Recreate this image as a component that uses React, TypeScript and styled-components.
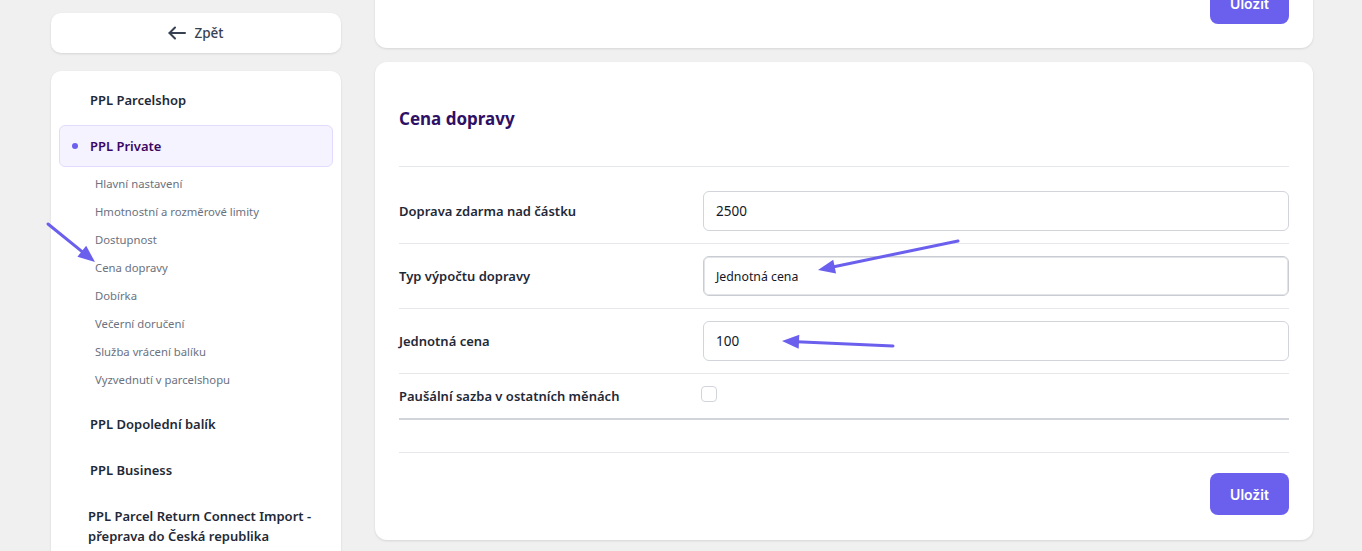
import React from "react";
import styled, { createGlobalStyle } from "styled-components";

const Global = createGlobalStyle`
  html, body { margin: 0; padding: 0; }
  body {
    background: #f0f0f1;
    font-family: "Noto Sans", "Segoe UI", sans-serif;
    color: #1f2937;
    overflow: hidden;
  }
  * { box-sizing: border-box; }
`;

const PURPLE = "#6b5fee";

const Page = styled.div`
  position: relative;
  display: flex;
  align-items: flex-start;
  gap: 34px;
  padding: 13px 0 0 51px;
  height: 551px;
  overflow: hidden;
`;

const Side = styled.aside`
  width: 290px;
  display: flex;
  flex-direction: column;
  gap: 18px;
  flex-shrink: 0;
`;

const Card = styled.div`
  background: #fff;
  border-radius: 10px;
  box-shadow: 0 1px 3px rgba(0, 0, 0, 0.08), 0 1px 2px rgba(0, 0, 0, 0.04);
`;

const BackCard = styled(Card)`
  height: 40px;
  display: flex;
  align-items: center;
  justify-content: center;
  gap: 8px;
  font-size: 13.5px;
  font-weight: 500;
  color: #374151;
`;

const NavCard = styled(Card)`
  padding: 8px 8px 20px;
  display: flex;
  flex-direction: column;
  min-height: 500px;
`;

const NavItem = styled.div<{ $active?: boolean; $shift?: number }>`
  display: flex;
  align-items: flex-start;
  gap: 12px;
  padding: 10px 12px 10px ${(p) => 12 - (p.$shift || 0)}px;
  border-radius: 6px;
  border: 1px solid ${(p) => (p.$active ? "#e3dbfd" : "transparent")};
  background: ${(p) => (p.$active ? "#f5f3ff" : "transparent")};
  color: ${(p) => (p.$active ? "#3b0764" : "#1f2937")};
  font-size: 13px;
  font-weight: 600;
  line-height: 20px;
  margin-top: 4px;
  &:first-child { margin-top: 0; }
`;

const Dot = styled.span<{ $visible?: boolean }>`
  width: 6px;
  height: 6px;
  border-radius: 50%;
  margin-top: 7px;
  flex-shrink: 0;
  background: ${(p) => (p.$visible ? PURPLE : "transparent")};
`;

const SubList = styled.div`
  display: flex;
  flex-direction: column;
  margin: 3px 0 5px;
  padding-left: 36px;
`;

const SubItem = styled.div`
  height: 28px;
  line-height: 28px;
  font-size: 11.3px;
  color: #6b7280;
`;

const Main = styled.main`
  width: 938px;
  display: flex;
  flex-direction: column;
  gap: 14px;
  margin-top: -55px;
  flex-shrink: 0;
`;

const TopCard = styled(Card)`
  padding: 24px;
  display: flex;
  justify-content: flex-end;
  border-radius: 12px;
`;

const PanelCard = styled(Card)`
  padding: 0 24px 25px;
  border-radius: 12px;
`;

const PanelHead = styled.div`
  padding: 45px 0 35px;
  border-bottom: 1px solid #e5e7eb;
`;

const Title = styled.h2`
  margin: 0;
  font-size: 17px;
  line-height: 24px;
  font-weight: 700;
  color: #2e1065;
`;

const Form = styled.div`
  padding-top: 12px;
  border-bottom: 2px solid #d1d5db;
`;

const Row = styled.div<{ $last?: boolean }>`
  display: grid;
  grid-template-columns: 304px 1fr;
  align-items: center;
  padding: 12px 0;
  border-bottom: ${(p) => (p.$last ? "none" : "1px solid #e5e7eb")};
`;

const Label = styled.label`
  font-size: 13px;
  line-height: 20px;
  font-weight: 600;
  color: #1f2937;
`;

const Input = styled.div<{ $select?: boolean }>`
  height: 40px;
  border: 1px solid ${(p) => (p.$select ? "#c9ccd2" : "#d1d5db")};
  box-shadow: ${(p) => (p.$select ? "inset 0 0 0 1px #e2e4e8" : "none")};
  border-radius: 6px;
  display: flex;
  align-items: center;
  padding-left: 12px;
  font-size: ${(p) => (p.$select ? 12.3 : 13.5)}px;
  color: #111827;
  background: #fff;
`;

const Checkbox = styled.span`
  width: 16px;
  height: 16px;
  margin-left: -2px;
  margin-top: -4px;
  border: 1px solid #d1d5db;
  border-radius: 4px;
  display: block;
`;

const Footer = styled.div`
  margin-top: 32px;
  border-top: 1px solid #e5e7eb;
  padding-top: 20px;
  display: flex;
  justify-content: flex-end;
`;

const SaveButton = styled.button`
  width: 79px;
  height: 42px;
  border: none;
  border-radius: 8px;
  background: ${PURPLE};
  color: #fff;
  font-family: Inter, "Noto Sans", sans-serif;
  font-size: 14px;
  font-weight: 600;
`;

const Overlay = styled.svg`
  position: absolute;
  left: 0;
  top: 0;
  width: 1362px;
  height: 551px;
  pointer-events: none;
`;

function Arrow({ x1, y1, x2, y2 }: { x1: number; y1: number; x2: number; y2: number }) {
  const dx = x2 - x1;
  const dy = y2 - y1;
  const len = Math.hypot(dx, dy);
  const ux = dx / len;
  const uy = dy / len;
  const hl = 17;
  const hw = 7;
  const bx = x2 - ux * hl;
  const by = y2 - uy * hl;
  const pts = [
    `${x2},${y2}`,
    `${bx - uy * hw},${by + ux * hw}`,
    `${bx + uy * hw},${by - ux * hw}`,
  ].join(" ");
  return (
    <g>
      <line x1={x1} y1={y1} x2={bx + ux * 2} y2={by + uy * 2} stroke={PURPLE} strokeWidth={3} strokeLinecap="round" />
      <polygon points={pts} fill={PURPLE} />
    </g>
  );
}

const subs = [
  "Hlavní nastavení",
  "Hmotnostní a rozměrové limity",
  "Dostupnost",
  "Cena dopravy",
  "Dobírka",
  "Večerní doručení",
  "Služba vrácení balíku",
  "Vyzvednutí v parcelshopu",
];

export default function App() {
  return (
    <>
      <Global />
      <Page>
        <Side>
          <BackCard>
            <svg width="18" height="14" viewBox="0 0 18 14" fill="none" stroke="#374151" strokeWidth="2" strokeLinecap="round" strokeLinejoin="round">
              <path d="M17 7H1.5" />
              <path d="M7 1.5L1.5 7 7 12.5" />
            </svg>
            Zpět
          </BackCard>
          <NavCard>
            <NavItem>
              <Dot />
              PPL Parcelshop
            </NavItem>
            <NavItem $active>
              <Dot $visible />
              PPL Private
            </NavItem>
            <SubList>
              {subs.map((s) => (
                <SubItem key={s}>{s}</SubItem>
              ))}
            </SubList>
            <NavItem>
              <Dot />
              PPL Dopolední balík
            </NavItem>
            <NavItem>
              <Dot />
              PPL Business
            </NavItem>
            <NavItem $shift={2}>
              <Dot />
              PPL Parcel Return Connect Import - přeprava do Česká republika
            </NavItem>
          </NavCard>
        </Side>
        <Main>
          <TopCard>
            <SaveButton>Uložit</SaveButton>
          </TopCard>
          <PanelCard>
            <PanelHead>
              <Title>Cena dopravy</Title>
            </PanelHead>
            <Form>
              <Row>
                <Label>Doprava zdarma nad částku</Label>
                <Input>2500</Input>
              </Row>
              <Row>
                <Label>Typ výpočtu dopravy</Label>
                <Input $select>Jednotná cena</Input>
              </Row>
              <Row>
                <Label>Jednotná cena</Label>
                <Input>100</Input>
              </Row>
              <Row $last>
                <Label>Paušální sazba v ostatních měnách</Label>
                <Checkbox />
              </Row>
            </Form>
            <Footer>
              <SaveButton>Uložit</SaveButton>
            </Footer>
          </PanelCard>
        </Main>
        <Overlay viewBox="0 0 1362 551">
          <Arrow x1={48} y1={224} x2={95} y2={262} />
          <Arrow x1={958} y1={241} x2={818} y2={270} />
          <Arrow x1={893} y1={346} x2={782} y2={341} />
        </Overlay>
      </Page>
    </>
  );
}
